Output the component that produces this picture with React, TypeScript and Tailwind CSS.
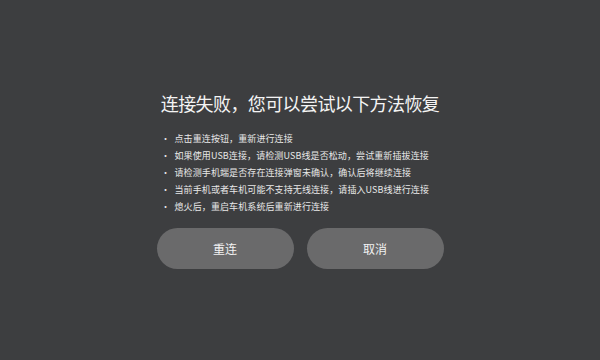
import React from "react";

const items = [
  "点击重连按钮，重新进行连接",
  "如果使用USB连接，请检测USB线是否松动，尝试重新插拔连接",
  "请检测手机端是否存在连接弹窗未确认，确认后将继续连接",
  "当前手机或者车机可能不支持无线连接，请插入USB线进行连接",
  "熄火后，重启车机系统后重新进行连接",
];

export default function App() {
  return (
    <div
      className="w-[600px] h-[360px] bg-[#3d3e40] flex flex-col items-center pt-[91px]"
      style={{ fontFamily: '"Noto Sans CJK SC", "Noto Sans", sans-serif' }}
    >
      <div className="text-[18px] tracking-[-0.6px] leading-[24px] text-[#f4f4f4]">连接失败，您可以尝试以下方法恢复</div>
      <div className="mt-[15px] w-[287px] flex flex-col text-[9px] tracking-[0.1px] leading-[17px] text-[#e8e8e8]">
        {items.map((t) => (
          <div key={t} className="flex">
            <span className="w-[18px] text-center">·</span>
            <span>{t}</span>
          </div>
        ))}
      </div>
      <div className="mt-[13px] flex gap-[13px]">
        <button className="w-[137px] h-[41px] rounded-full bg-[#6a6a6b] text-[12px] text-[#f2f2f2]">重连</button>
        <button className="w-[137px] h-[41px] rounded-full bg-[#6a6a6b] text-[12px] text-[#f2f2f2]">取消</button>
      </div>
    </div>
  );
}
